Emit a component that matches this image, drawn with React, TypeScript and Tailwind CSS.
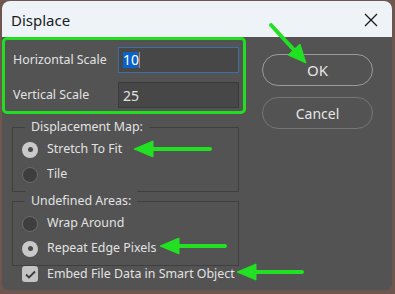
import React from "react";

const font = { fontFamily: '"Noto Sans", "Open Sans", sans-serif' };

const Radio = ({ checked }: { checked?: boolean }) =>
  checked ? (
    <span className="w-[16px] h-[16px] rounded-full bg-[#c9c9c9] flex items-center justify-center">
      <span className="w-[5px] h-[5px] rounded-full bg-[#4a4a4a]" />
    </span>
  ) : (
    <span className="w-[16px] h-[16px] rounded-full bg-[#3e3e3e] border border-[#6a6a6a]" />
  );

const Option = ({ label, checked }: { label: string; checked?: boolean }) => (
  <div className="flex items-center gap-[9px] h-[25px] pl-[9px]">
    <Radio checked={checked} />
    <span>{label}</span>
  </div>
);

const Group = ({ title, children }: { title: string; children: React.ReactNode }) => (
  <div className="relative ml-[10px] w-[227px] border border-[#3f3f3f] pt-[9px] pb-[4px]">
    <span className="absolute left-[12px] top-[-11px] bg-[#535353] px-[6px] leading-[20px]">{title}</span>
    {children}
  </div>
);

const App = () => {
  return (
    <div className="w-[395px] h-[294px] bg-[#6e564e] pt-[1px] pl-[2px] relative overflow-hidden text-[12.4px] text-[#e2e2e2]" style={font}>
      <div className="w-[390px] h-[289px] rounded-t-[8px] rounded-b-[6px] overflow-hidden bg-[#535353] flex flex-col">
        <div className="h-[36px] bg-[#edf3f7] flex items-center justify-between pl-[9px] pr-[14px] pt-[2px] text-[#1b1b1b]">
          <span className="text-[15px]">Displace</span>
          <svg width="14" height="14" viewBox="0 0 14 14">
            <path d="M1 1L13 13M13 1L1 13" stroke="#1b1b1b" strokeWidth="1.3" />
          </svg>
        </div>
        <div className="flex">
          <div className="w-[246px] flex flex-col">
            <div className="w-[244px] h-[77px] border-[3px] border-[#22dd22] rounded-[5px] flex flex-col gap-[9px] pt-[7px] pl-[8px]">
              <div className="flex items-center">
                <span className="w-[105px]">Horizontal Scale</span>
                <div className="w-[121px] h-[26px] bg-[#474747] border border-[#3d6ea6] flex items-center pl-[4px]">
                  <span className="bg-[#0b63c9] text-white leading-[16px] text-[14px]">10</span>
                  <span className="w-[1px] h-[16px] bg-[#e07a20]" />
                </div>
              </div>
              <div className="flex items-center">
                <span className="w-[105px]">Vertical Scale</span>
                <div className="w-[121px] h-[26px] bg-[#474747] border border-[#3a3a3a] flex items-center pl-[4px] text-[14px]">
                  25
                </div>
              </div>
            </div>
            <div className="mt-[13px]">
              <Group title="Displacement Map:">
                <Option label="Stretch To Fit" checked />
                <Option label="Tile" />
              </Group>
            </div>
            <div className="mt-[9px]">
              <Group title="Undefined Areas:">
                <Option label="Wrap Around" />
                <Option label="Repeat Edge Pixels" checked />
              </Group>
            </div>
            <div className="flex items-center gap-[9px] ml-[20px] mt-[-1px] h-[18px]">
              <span className="w-[16px] h-[16px] rounded-[3px] bg-[#c4c4c4] flex items-center justify-center">
                <svg width="11" height="9" viewBox="0 0 11 9">
                  <path d="M1 4.5L4 7.5L10 1.5" stroke="#3c3c3c" strokeWidth="1.8" fill="none" />
                </svg>
              </span>
              <span className="whitespace-nowrap">Embed File Data in Smart Object</span>
            </div>
          </div>
          <div className="flex flex-col gap-[11px] pl-[14px] pt-[17px]">
            <button className="w-[111px] h-[32px] rounded-full border border-[#9a9a9a] text-[15px] text-[#e6e6e6]">OK</button>
            <button className="w-[111px] h-[32px] rounded-full border border-[#757575] text-[14px] text-[#e6e6e6]">Cancel</button>
          </div>
        </div>
      </div>
      <svg className="absolute left-0 top-0 pointer-events-none" width="395" height="294" viewBox="0 0 395 294">
        <g fill="#22e022" stroke="#22e022">
          <line x1="271" y1="25" x2="295" y2="51" strokeWidth="4" strokeLinecap="round" />
          <polygon points="306,63 288,55 300,44" strokeWidth="1" />
          <line x1="210" y1="149" x2="148" y2="149" strokeWidth="4" strokeLinecap="round" />
          <polygon points="134,149 153,141 153,157" strokeWidth="1" />
          <line x1="225" y1="246" x2="175" y2="246" strokeWidth="4" strokeLinecap="round" />
          <polygon points="160,246 179,238 179,254" strokeWidth="1" />
          <line x1="302" y1="272" x2="252" y2="272" strokeWidth="4" strokeLinecap="round" />
          <polygon points="237,272 256,264 256,280" strokeWidth="1" />
        </g>
      </svg>
    </div>
  );
};

export default App;
